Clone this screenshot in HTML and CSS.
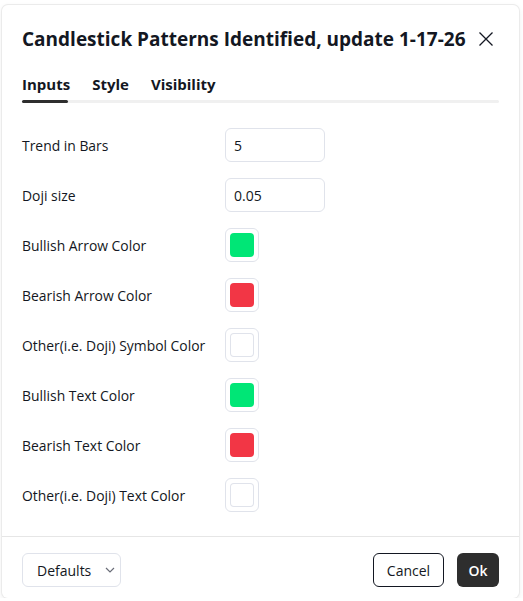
FILE: index.html
```html
<!DOCTYPE html>
<html lang="en">
<head>
    <meta charset="UTF-8">
    <meta name="viewport" content="width=device-width, initial-scale=1.0">
    <title>Indicator settings</title>
    <link rel="stylesheet" href="styles.css">
</head>
<body>

    <div class="dialog">
        <div class="header">
            <h1 class="title">Candlestick Patterns Identified, update 1-17-26</h1>
            <button class="close-btn" aria-label="Close">
                <svg width="16" height="16" viewBox="0 0 16 16"><path d="M1.5 1.5l13 13M14.5 1.5l-13 13" stroke="#131722" stroke-width="1.3" fill="none"/></svg>
            </button>
        </div>

        <div class="tabs">
            <span class="tab active">Inputs</span>
            <span class="tab">Style</span>
            <span class="tab">Visibility</span>
        </div>
        <div class="tab-track"><div class="tab-indicator"></div></div>

        <div class="rows">
            <div class="row">
                <span class="label">Trend in Bars</span>
                <input class="field" type="text" value="5">
            </div>
            <div class="row">
                <span class="label">Doji size</span>
                <input class="field" type="text" value="0.05">
            </div>
            <div class="row">
                <span class="label">Bullish Arrow Color</span>
                <span class="swatch"><span class="swatch-color green"></span></span>
            </div>
            <div class="row">
                <span class="label">Bearish Arrow Color</span>
                <span class="swatch"><span class="swatch-color red"></span></span>
            </div>
            <div class="row">
                <span class="label">Other(i.e. Doji) Symbol Color</span>
                <span class="swatch"><span class="swatch-color white"></span></span>
            </div>
            <div class="row">
                <span class="label">Bullish Text Color</span>
                <span class="swatch"><span class="swatch-color green"></span></span>
            </div>
            <div class="row">
                <span class="label">Bearish Text Color</span>
                <span class="swatch"><span class="swatch-color red"></span></span>
            </div>
            <div class="row">
                <span class="label">Other(i.e. Doji) Text Color</span>
                <span class="swatch"><span class="swatch-color white"></span></span>
            </div>
        </div>

        <div class="footer">
            <button class="defaults-btn">Defaults
                <svg width="10" height="6" viewBox="0 0 10 6"><path d="M1 1l4 4 4-4" stroke="#6a6d78" stroke-width="1.2" fill="none"/></svg>
            </button>
            <div class="actions">
                <button class="cancel-btn">Cancel</button>
                <button class="ok-btn">Ok</button>
            </div>
        </div>
    </div>

</body>
</html>
```

FILE: styles.css
```css
body {
    font-family: "Open Sans", "Noto Sans", sans-serif;
    background-color: #fff;
    margin: 0;
    color: #131722;
}
.dialog {
    margin: 5px 4px 0 2px;
    height: 593px;
    box-sizing: border-box;
    background-color: #fff;
    border-radius: 6px;
    box-shadow: 0 0 0 1px #ebebeb, 0 2px 6px rgba(0, 0, 0, 0.08);
    padding: 0 20px;
    display: flex;
    flex-direction: column;
}
.header {
    display: flex;
    align-items: center;
    justify-content: space-between;
    padding-top: 20px;
    height: 28px;
}
.title {
    margin: 0;
    font-size: 19px;
    font-weight: 700;
    line-height: 28px;
    letter-spacing: 0;
}
.close-btn {
    background: none;
    border: none;
    padding: 0;
    margin-right: 5px;
    width: 16px;
    height: 16px;
    cursor: pointer;
}
.tabs {
    display: flex;
    gap: 22px;
    margin-top: 21px;
    height: 26px;
}
.tab {
    font-size: 15px;
    font-weight: 700;
    line-height: 20px;
}
.tab-track {
    height: 3px;
    background-color: #f0f0f0;
    border-radius: 2px;
}
.tab-indicator {
    width: 46px;
    height: 3px;
    background-color: #2e2e2e;
    border-radius: 2px;
}
.rows {
    display: flex;
    flex-direction: column;
    gap: 16px;
    margin-top: 25px;
    padding-bottom: 24px;
    border-bottom: 1px solid #e6e6e6;
    margin-left: -20px;
    margin-right: -20px;
    padding-left: 20px;
    padding-right: 20px;
}
.row {
    display: flex;
    align-items: center;
    height: 34px;
}
.label {
    width: 203px;
    font-size: 13.9px;
}
.field {
    width: 100px;
    height: 34px;
    box-sizing: border-box;
    border: 1px solid #e0e3eb;
    border-radius: 6px;
    padding: 0 8px;
    font-family: inherit;
    font-size: 14px;
    color: #131722;
}
.swatch {
    width: 34px;
    height: 34px;
    box-sizing: border-box;
    border: 1px solid #e0e3eb;
    border-radius: 6px;
    display: flex;
    align-items: center;
    justify-content: center;
}
.swatch-color {
    width: 24px;
    height: 24px;
    border-radius: 4px;
}
.green {
    background-color: #00e676;
}
.red {
    background-color: #f23645;
}
.white {
    background-color: #fff;
    box-shadow: inset 0 0 0 1px #e0e3eb;
}
.footer {
    display: flex;
    justify-content: space-between;
    align-items: center;
    padding-top: 16px;
}
.footer button {
    height: 34px;
    font-family: inherit;
    font-size: 14px;
    border-radius: 6px;
    cursor: pointer;
}
.defaults-btn {
    width: 99px;
    background-color: #fff;
    border: 1px solid #e0e3eb;
    color: #131722;
    display: flex;
    align-items: center;
    gap: 14px;
    padding: 0 0 0 14px;
}
.actions {
    display: flex;
    gap: 13px;
}
.cancel-btn {
    width: 71px;
    background-color: #fff;
    border: 1px solid #131722;
    color: #131722;
    font-size: 15px;
}
.ok-btn {
    width: 42px;
    background-color: #2e2e2e;
    border: none;
    color: #fff;
    font-weight: 600;
    font-size: 15px;
}
```
